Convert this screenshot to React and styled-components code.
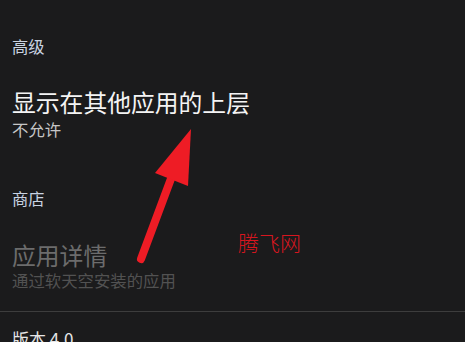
import React from "react";
import styled, { createGlobalStyle } from "styled-components";

const Global = createGlobalStyle`
  html, body { margin: 0; padding: 0; background: #1b1b1c; }
  body { width: 465px; height: 342px; overflow: hidden; }
`;

const Screen = styled.div`
  position: relative;
  width: 465px;
  height: 342px;
  overflow: hidden;
  background: #1b1b1c;
  font-family: "Noto Sans CJK SC", "Noto Sans", sans-serif;
`;

const Section = styled.div`
  display: flex;
  flex-direction: column;
  padding: ${(p) => p.$pad || "0"};
`;

const Header = styled.div`
  padding-left: 12px;
  font-size: 16.3px;
  line-height: 20px;
  color: #c9d3e2;
`;

const Item = styled.div`
  display: flex;
  flex-direction: column;
  gap: ${(p) => p.$gap || "2px"};
  padding: 0 12px;
  margin-top: ${(p) => p.$mt || "0"};
`;

const Title = styled.div`
  font-size: 23.8px;
  line-height: 28px;
  color: ${(p) => (p.$disabled ? "#6c6c6c" : "#f4f4f4")};
`;

const Summary = styled.div`
  font-size: 16.4px;
  line-height: 22px;
  color: ${(p) => (p.$disabled ? "#525252" : "#c6c6c6")};
`;

const Divider = styled.div`
  height: 1px;
  background: #3d3d3d;
  margin-top: 20px;
`;

const Version = styled.div`
  padding: 16px 12px 0;
  font-size: 17px;
  line-height: 22px;
  color: #e6e6e6;
`;

const Watermark = styled.div`
  position: absolute;
  left: 238px;
  top: 228px;
  font-family: "Noto Sans CJK SC", sans-serif;
  font-weight: 300;
  font-size: 21px;
  line-height: 28px;
  color: #d8161f;
`;

const ArrowSvg = styled.svg`
  position: absolute;
  left: 0;
  top: 0;
  pointer-events: none;
`;

export default function App() {
  return (
    <Screen>
      <Global />
      <Section $pad="36px 0 0">
        <Header>高级</Header>
        <Item $mt="32px">
          <Title>显示在其他应用的上层</Title>
          <Summary>不允许</Summary>
        </Item>
      </Section>
      <Section $pad="48px 0 0">
        <Header>商店</Header>
        <Item $mt="33px" $gap="0px">
          <Title $disabled>应用详情</Title>
          <Summary $disabled>通过软天空安装的应用</Summary>
        </Item>
      </Section>
      <Divider />
      <Version>版本 4.0</Version>
      <Watermark>腾飞网</Watermark>
      <ArrowSvg width="465" height="342" viewBox="0 0 465 342">
        <line x1="172" y1="176" x2="141" y2="259" stroke="#ee1c25" strokeWidth="8" strokeLinecap="round" />
        <polygon points="191,129 155,173 188,186" fill="#ee1c25" />
      </ArrowSvg>
    </Screen>
  );
}
